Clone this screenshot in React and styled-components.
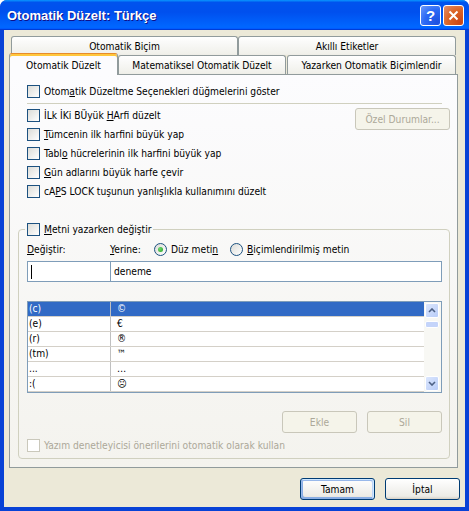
import React from 'react';
import styled, { createGlobalStyle, css } from 'styled-components';

const GlobalStyle = createGlobalStyle`
  html, body {
    margin: 0;
    padding: 0;
    background: #fff;
  }
  body {
    font-family: "DejaVu Sans Condensed", "Liberation Sans", Arial, sans-serif;
    font-size: 10.2px;
    color: #000;
  }
  * {
    box-sizing: border-box;
  }
`;

const Window = styled.div`
  width: 469px;
  height: 511px;
  display: flex;
  flex-direction: column;
  background: #0842d6;
  border-radius: 7px 7px 0 0;
  overflow: hidden;
`;

const TitleBar = styled.div`
  height: 30px;
  flex: none;
  display: flex;
  align-items: center;
  justify-content: space-between;
  padding: 0 5px 0 7px;
  background: linear-gradient(180deg, #0997ff, #0053ee 8%, #0050ee 40%, #06f 88%, #06f 93%, #005bff 95%, #003dd7 96%, #003dd7);
`;

const Title = styled.div`
  color: #fff;
  font-family: "Liberation Sans", Arial, sans-serif;
  font-weight: bold;
  font-size: 13px;
  text-shadow: 1px 1px #0f1089;
`;

const TitleButtons = styled.div`
  display: flex;
  gap: 2px;
`;

const TitleButton = styled.div`
  width: 21px;
  height: 21px;
  border: 1px solid #fff;
  border-radius: 3px;
  display: flex;
  align-items: center;
  justify-content: center;
  color: #fff;
  font-family: "Liberation Sans", Arial, sans-serif;
  font-weight: bold;
  font-size: 15px;
  background: ${p => p.$close
    ? 'radial-gradient(circle at 85% 85%, #cc4615, #dc6527 55%, #e1906f)'
    : 'radial-gradient(circle at 85% 85%, #1d50e0, #2c6af5 55%, #6d9bfa)'};
`;

const Frame = styled.div`
  flex: 1;
  display: flex;
  flex-direction: column;
  background: #ece9d8;
  border: solid #0842d6;
  border-width: 0 4px 4px;
  padding: 6px 7px 7px 5px;
`;

const TabRow = styled.div`
  display: flex;
  align-items: flex-end;
  height: 19px;
  padding-left: ${p => p.$indent || 0}px;
`;

const Tab = styled.div`
  width: ${p => p.$w}px;
  height: 19px;
  flex: none;
  margin-right: ${p => p.$gap || 0}px;
  display: flex;
  align-items: center;
  justify-content: center;
  border: 1px solid #919b9c;
  border-bottom: none;
  border-radius: 3px 3px 0 0;
  background: linear-gradient(180deg, #fff, #fafaf9 26%, #f0f0ea 95%, #ecebe5);
  white-space: nowrap;
  ${p => p.$active && css`
    height: 22px;
    margin-bottom: -1px;
    position: relative;
    z-index: 1;
    padding-top: 1px;
    background: #fcfcfe;
    border-top-color: #e68b2c;
    box-shadow: inset 0 2px #ffc73c;
  `}
`;

const Panel = styled.div`
  height: 394px;
  flex: none;
  border: 1px solid #919b9c;
  background: linear-gradient(180deg, #fcfcfe, #f4f3ee);
  padding: 7px 7px 0 17px;
  display: flex;
  flex-direction: column;
`;

const CheckRow = styled.label`
  display: flex;
  align-items: center;
  gap: 4px;
  height: ${p => p.$h || 19}px;
  margin-top: ${p => p.$top || 0}px;
  white-space: nowrap;
  color: ${p => (p.$disabled ? '#aca899' : '#000')};
`;

const Box = styled.span`
  width: 13px;
  height: 13px;
  flex: none;
  border: 1px solid ${p => (p.$disabled ? '#cac8bb' : '#1c5180')};
  background: ${p => (p.$disabled ? '#fff' : 'linear-gradient(135deg, #dcdcd7, #fff)')};
`;

const U = styled.span`
  text-decoration: underline;
`;

const Separator = styled.div`
  height: 1px;
  background: #d0d0bf;
  margin: 2px 8px 2px 0;
`;

const OptionsArea = styled.div`
  display: flex;
  justify-content: space-between;
  align-items: flex-start;
`;

const CheckList = styled.div`
  display: flex;
  flex-direction: column;
`;

const Button = styled.div`
  width: ${p => p.$w || 75}px;
  height: 22px;
  flex: none;
  margin-top: ${p => p.$top || 0}px;
  display: flex;
  align-items: center;
  justify-content: center;
  border: 1px solid #003c74;
  border-radius: 3px;
  background: linear-gradient(180deg, #fff, #ecebe6 86%, #d6d0c5);
  ${p => p.$default && css`
    box-shadow: inset -1px 1px #cee7ff, inset 1px 2px #98b8ea, inset -2px 2px #bcd4f6, inset 1px -1px #89ade4, inset 2px -2px #89ade4;
  `}
  ${p => p.$disabled && css`
    color: #aca899;
    border-color: #c9c7ba;
    background: #f5f4ea;
  `}
`;

const Group = styled.fieldset`
  margin: 21px 0 0 -9px;
  padding: 0 7px 6px 8px;
  border: 1px solid #d0d0bf;
  border-radius: 4px;
  min-width: 0;
`;

const Legend = styled.legend`
  padding: 0 2px;
  margin-left: -2px;
  height: 14px;
  display: flex;
  align-items: center;
`;

const LabelRow = styled.div`
  display: flex;
  align-items: center;
  height: 17px;
  margin-top: 5px;
  white-space: nowrap;
`;

const FieldLabel = styled.span`
  width: ${p => p.$w}px;
  flex: none;
`;

const RadioOption = styled.label`
  display: flex;
  align-items: center;
  gap: 4px;
  width: ${p => p.$w || 'auto'};
  flex: none;
`;

const Radio = styled.span`
  width: 13px;
  height: 13px;
  border-radius: 50%;
  border: 1px solid #1c5180;
  background: linear-gradient(135deg, #dcdcd7, #fff);
  display: flex;
  align-items: center;
  justify-content: center;
  &::after {
    content: '';
    display: ${p => (p.$checked ? 'block' : 'none')};
    width: 5px;
    height: 5px;
    border-radius: 50%;
    background: radial-gradient(circle at 35% 35%, #6ed86e, #21a121);
  }
`;

const InputRow = styled.div`
  display: flex;
  height: 21px;
  margin-top: 3px;
`;

const TextInput = styled.div`
  width: ${p => (p.$w ? `${p.$w}px` : 'auto')};
  flex: ${p => (p.$w ? 'none' : 1)};
  margin-left: ${p => (p.$w ? 0 : -1)}px;
  border: 1px solid #7f9db9;
  background: #fff;
  display: flex;
  align-items: center;
  padding-left: 3px;
`;

const Caret = styled.span`
  width: 1px;
  height: 14px;
  background: #000;
`;

const ListBox = styled.div`
  display: flex;
  height: 92px;
  margin-top: 19px;
  border: 1px solid #7f9db9;
  background: #fff;
`;

const ListRows = styled.div`
  flex: 1;
  overflow: hidden;
`;

const ListRow = styled.div`
  display: flex;
  height: 15px;
  border-bottom: 1px solid #d4d0c8;
  background: ${p => (p.$selected ? '#316ac5' : 'transparent')};
  color: ${p => (p.$selected ? '#fff' : '#000')};
`;

const KeyCell = styled.div`
  width: 83px;
  flex: none;
  padding-left: 1px;
  border-right: 1px solid #c0c0c0;
  line-height: 14px;
`;

const ValueCell = styled.div`
  flex: 1;
  padding-left: 6px;
  line-height: 14px;
`;

const ScrollBar = styled.div`
  width: 17px;
  flex: none;
  display: flex;
  flex-direction: column;
  padding: 1px 2px 1px 1px;
  background: #f8f8f4;
`;

const ScrollButton = styled.div`
  height: 15px;
  border: 1px solid #fff;
  border-radius: 2px;
  background: linear-gradient(135deg, #dbe6fd, #b9cdf8);
  display: flex;
  align-items: center;
  justify-content: center;
  margin-top: ${p => (p.$bottom ? 'auto' : 0)};
`;

const Thumb = styled.div`
  height: 7px;
  margin-top: 3px;
  border: 1px solid #fff;
  border-radius: 2px;
  background: #c4d4fa;
`;

const ButtonRow = styled.div`
  display: flex;
  justify-content: flex-end;
  gap: 10px;
  margin: ${p => p.$m};
`;

const Arrow = ({ down }) => (
  <svg width="8" height="5" viewBox="0 0 8 5">
    <path
      d={down ? 'M1 1 L4 4 L7 1' : 'M1 4 L4 1 L7 4'}
      fill="none"
      stroke="#4d6185"
      strokeWidth="1.6"
    />
  </svg>
);

const CloseIcon = () => (
  <svg width="11" height="11" viewBox="0 0 11 11">
    <path d="M1.5 1.5 L9.5 9.5 M9.5 1.5 L1.5 9.5" stroke="#fff" strokeWidth="2" />
  </svg>
);

const Check = ({ children, disabled, h, top }) => (
  <CheckRow $disabled={disabled} $h={h} $top={top}>
    <Box $disabled={disabled} />
    <span>{children}</span>
  </CheckRow>
);

const entries = [
  ['(c)', '©'],
  ['(e)', '€'],
  ['(r)', '®'],
  ['(tm)', '™'],
  ['...', '…'],
  [':(', '☹'],
];

export default function App() {
  return (
    <>
      <GlobalStyle />
      <Window>
        <TitleBar>
          <Title>Otomatik Düzelt: Türkçe</Title>
          <TitleButtons>
            <TitleButton>?</TitleButton>
            <TitleButton $close>
              <CloseIcon />
            </TitleButton>
          </TitleButtons>
        </TitleBar>
        <Frame>
          <TabRow $indent={2}>
            <Tab $w={227}>Otomatik Biçim</Tab>
            <Tab $w={218}>Akıllı Etiketler</Tab>
          </TabRow>
          <TabRow>
            <Tab $w={109} $active>Otomatik Düzelt</Tab>
            <Tab $w={168} $gap={1}>Matematiksel Otomatik Düzelt</Tab>
            <Tab $w={169}>Yazarken Otomatik Biçimlendir</Tab>
          </TabRow>
          <Panel>
            <Check>
              Otom<U>a</U>tik Düzeltme Seçenekleri düğmelerini göster
            </Check>
            <Separator />
            <OptionsArea>
              <CheckList>
                <Check>
                  İLk İKi BÜyük <U>H</U>Arfi düzelt
                </Check>
                <Check>
                  <U>T</U>ümcenin ilk harfini büyük yap
                </Check>
                <Check>
                  Tabl<U>o</U> hücrelerinin ilk harfini büyük yap
                </Check>
                <Check>
                  <U>G</U>ün adlarını büyük harfe çevir
                </Check>
                <Check>
                  cA<U>P</U>S LOCK tuşunun yanlışlıkla kullanımını düzelt
                </Check>
              </CheckList>
              <Button $w={95} $top={2} $disabled>
                Özel Durumlar...
              </Button>
            </OptionsArea>
            <Group>
              <Legend>
                <Check h={14}>
                  <U>M</U>etni yazarken değiştir
                </Check>
              </Legend>
              <LabelRow>
                <FieldLabel $w={83}>
                  <U>D</U>eğiştir:
                </FieldLabel>
                <FieldLabel $w={44}>
                  <U>Y</U>erine:
                </FieldLabel>
                <RadioOption $w="76px">
                  <Radio $checked />
                  <span>
                    Düz meti<U>n</U>
                  </span>
                </RadioOption>
                <RadioOption>
                  <Radio />
                  <span>
                    <U>B</U>içimlendirilmiş metin
                  </span>
                </RadioOption>
              </LabelRow>
              <InputRow>
                <TextInput $w={84}>
                  <Caret />
                </TextInput>
                <TextInput>deneme</TextInput>
              </InputRow>
              <ListBox>
                <ListRows>
                  {entries.map(([key, value], i) => (
                    <ListRow key={key} $selected={i === 0}>
                      <KeyCell>{key}</KeyCell>
                      <ValueCell>{value}</ValueCell>
                    </ListRow>
                  ))}
                </ListRows>
                <ScrollBar>
                  <ScrollButton>
                    <Arrow />
                  </ScrollButton>
                  <Thumb />
                  <ScrollButton $bottom>
                    <Arrow down />
                  </ScrollButton>
                </ScrollBar>
              </ListBox>
              <ButtonRow $m="18px 0 0">
                <Button $disabled>Ekle</Button>
                <Button $disabled>Sil</Button>
              </ButtonRow>
              <Check disabled h={14} top={5}>
                Yazım denetleyicisi önerilerini otomatik olarak kullan
              </Check>
            </Group>
          </Panel>
          <ButtonRow $m="10px -2px 0 0">
            <Button $default>Tamam</Button>
            <Button>İptal</Button>
          </ButtonRow>
        </Frame>
      </Window>
    </>
  );
}
